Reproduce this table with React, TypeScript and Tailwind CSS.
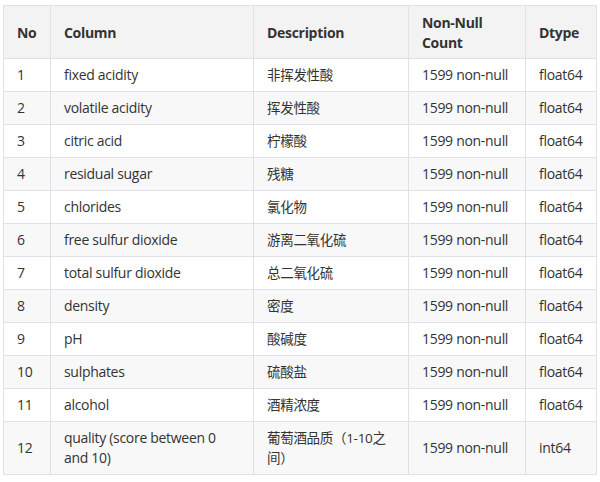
const rows: [string, string, string, string, string][] = [
  ["1", "fixed acidity", "非挥发性酸", "1599 non-null", "float64"],
  ["2", "volatile acidity", "挥发性酸", "1599 non-null", "float64"],
  ["3", "citric acid", "柠檬酸", "1599 non-null", "float64"],
  ["4", "residual sugar", "残糖", "1599 non-null", "float64"],
  ["5", "chlorides", "氯化物", "1599 non-null", "float64"],
  ["6", "free sulfur dioxide", "游离二氧化硫", "1599 non-null", "float64"],
  ["7", "total sulfur dioxide", "总二氧化硫", "1599 non-null", "float64"],
  ["8", "density", "密度", "1599 non-null", "float64"],
  ["9", "pH", "酸碱度", "1599 non-null", "float64"],
  ["10", "sulphates", "硫酸盐", "1599 non-null", "float64"],
  ["11", "alcohol", "酒精浓度", "1599 non-null", "float64"],
  ["12", "quality (score between 0 and 10)", "葡萄酒品质（1-10之间）", "1599 non-null", "int64"],
]

export default function App() {
  return (
    <div className="bg-white w-[600px] h-[482px] pt-[5px] pl-[3px] font-['Open_Sans','Noto_Sans_CJK_SC',sans-serif] text-[14px] leading-[20px] tracking-[-0.3px] text-[#333]">
      <table className="table-fixed border-collapse w-[593px]">
        <colgroup>
          <col className="w-[47px]" />
          <col className="w-[203px]" />
          <col className="w-[155px]" />
          <col className="w-[117px]" />
          <col className="w-[71px]" />
        </colgroup>
        <thead>
          <tr className="bg-[#f3f3f3]">
            {["No", "Column", "Description", "Non-Null Count", "Dtype"].map((h) => (
              <th key={h} className="border border-[#dfe2e5] px-[13px] pt-[7px] pb-[5px] text-left font-bold">
                {h}
              </th>
            ))}
          </tr>
        </thead>
        <tbody>
          {rows.map((r, i) => (
            <tr key={r[0]} className={i % 2 === 1 ? "bg-[#f8f8f8]" : "bg-white"}>
              {r.map((c, j) => (
                <td
                  key={j}
                  className={
                    j === 2
                      ? "border border-[#dfe2e5] px-[13px] py-[6px] text-[13.5px]"
                      : "border border-[#dfe2e5] px-[13px] py-[6px]"
                  }
                >
                  {c}
                </td>
              ))}
            </tr>
          ))}
        </tbody>
      </table>
    </div>
  )
}
